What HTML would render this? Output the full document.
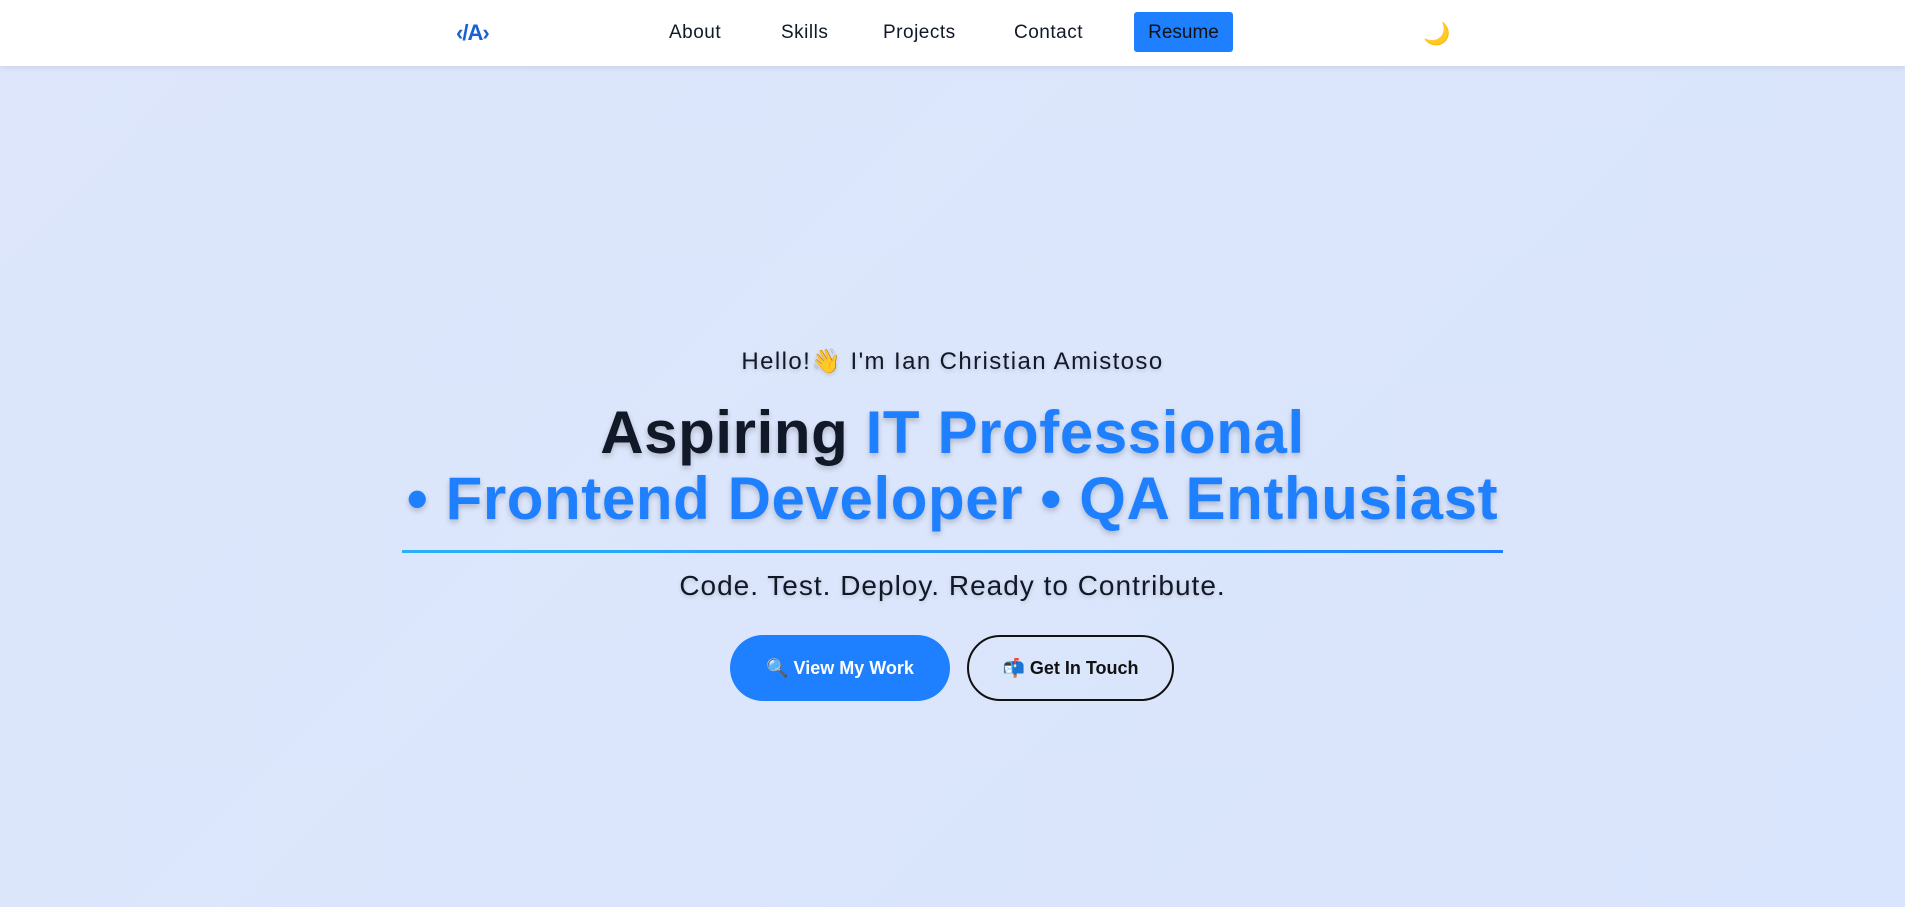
<!DOCTYPE html>
<html><head><meta charset="utf-8"><style>
*{margin:0;padding:0;box-sizing:border-box}
body{width:1905px;height:907px;overflow:hidden;background:linear-gradient(135deg,#dde6fb,#d9e5fc);font-family:"Liberation Sans",sans-serif;color:#111827;position:relative}
nav{position:absolute;top:0;left:0;width:1905px;height:66px;background:#fff;box-shadow:0 2px 6px rgba(0,0,0,.08)}
.logo{position:absolute;left:456px;top:20px;font-weight:bold;font-size:22px;color:#1a5fd6;letter-spacing:-1px}
.l{position:absolute;top:22px;font-size:19px;color:#111827;letter-spacing:.5px}
.res{position:absolute;left:1134px;top:12px;width:99px;height:40px;background:#1e80ff;border-radius:3px;font-size:19px;text-align:center;line-height:42px;color:#111}
.moon{position:absolute;left:1423px;top:21px;font-size:22px}
.c{position:absolute;left:0;width:1905px;text-align:center}
h1{font-size:60px;font-weight:bold;line-height:66px;top:400px;text-shadow:0 3px 6px rgba(0,0,0,.2);letter-spacing:.6px}
.b{color:#1e80ff}
.line{position:absolute;left:402px;top:550px;width:1101px;height:3px;background:linear-gradient(90deg,#2bb0f5,#1e80ff)}
.sub{top:570px;font-size:28px;letter-spacing:1px;text-shadow:0 2px 4px rgba(0,0,0,.15)}
.btn{position:absolute;top:635px;height:66px;border-radius:33px;font-weight:bold;font-size:18px;display:flex;align-items:center;justify-content:center}
</style></head><body>
<nav>
<div class="logo">‹/A›</div>
<div class="l" style="left:669px">About</div>
<div class="l" style="left:781px">Skills</div>
<div class="l" style="left:883px">Projects</div>
<div class="l" style="left:1014px">Contact</div>
<div class="res">Resume</div>
<div class="moon">🌙</div>
</nav>
<div class="c" style="top:347px;font-size:24px;letter-spacing:1.4px;text-shadow:0 2px 4px rgba(0,0,0,.15)">Hello!👋 I'm Ian Christian Amistoso</div>
<h1 class="c">Aspiring <span class="b">IT Professional</span><br><span class="b">• Frontend Developer • QA Enthusiast</span></h1>
<div class="line"></div>
<div class="c sub">Code. Test. Deploy. Ready to Contribute.</div>
<div class="btn" style="left:730px;width:220px;background:#1e80ff;color:#fff">🔍 View My Work</div>
<div class="btn" style="left:967px;width:207px;border:2px solid #111;color:#111">📬 Get In Touch</div>
</body></html>
